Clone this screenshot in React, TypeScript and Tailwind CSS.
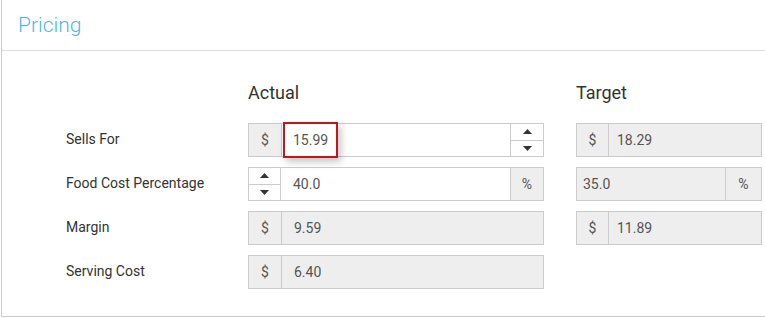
import React from 'react';

const font = { fontFamily: 'Roboto, "Liberation Sans", sans-serif' };

const Caret = ({ up }: { up?: boolean }) => (
  <svg width="9" height="5" viewBox="0 0 9 5">
    {up ? <path d="M0 5 L4.5 0 L9 5 Z" fill="#333" /> : <path d="M0 0 L9 0 L4.5 5 Z" fill="#333" />}
  </svg>
);

const Spinner = ({ className }: { className: string }) => (
  <div className={`flex flex-col ${className}`}>
    <button className="flex-1 flex items-center justify-center border-b border-[#ccc]">
      <Caret up />
    </button>
    <button className="flex-1 flex items-center justify-center">
      <Caret />
    </button>
  </div>
);

const Addon = ({ children, className }: { children: React.ReactNode; className: string }) => (
  <span className={`flex items-center justify-center bg-[#eee] text-[14px] text-[#555] ${className}`}>{children}</span>
);

const App = () => {
  return (
    <div className="w-[765px] h-[318px] overflow-hidden bg-white" style={font}>
      <div className="ml-px w-[800px] h-[317px] border-l border-b border-r border-[#ccc]">
        <div className="h-[51px] border-b border-[#ddd] pl-4 pt-[11px]">
          <h2 className="text-[21px] leading-7 font-light text-[#55b3ea]">Pricing</h2>
        </div>

        <div className="pt-[29px] pl-16 grid grid-cols-[150px_296px_186px] gap-x-8 gap-y-2.5 items-center">
          <div className="h-6" />
          <div className="text-[18px] leading-6 text-[#333] pt-[1px] mb-[8px]">Actual</div>
          <div className="text-[18px] leading-6 text-[#333] pt-[1px] mb-[8px]">Target</div>

          {/* Sells For */}
          <div className="text-[14px] text-[#333] -mt-0.5">Sells For</div>
          <div className="relative flex h-[34px] border border-[#ccc]">
            <Addon className="w-[33px] border-r border-[#ccc]">$</Addon>
            <input
              className="flex-1 min-w-0 pl-[11px] text-[14px] text-[#555] outline-none bg-white"
              defaultValue="15.99"
              readOnly
            />
            <Spinner className="w-[33px] border-l border-[#ccc]" />
            <div className="absolute left-[34px] top-[-2px] w-[55px] h-[36px] border-2 border-[#c0161c] shadow-[3px_4px_7px_rgba(0,0,0,0.22)] pointer-events-none" />
          </div>
          <div className="flex h-[34px] border border-[#ccc] bg-[#eee]">
            <Addon className="w-[32px] border-r border-[#ccc]">$</Addon>
            <span className="flex items-center pl-2 text-[14px] text-[#555]">18.29</span>
          </div>

          {/* Food Cost Percentage */}
          <div className="text-[14px] text-[#333] -mt-0.5">Food Cost Percentage</div>
          <div className="flex h-[34px] border border-[#ccc]">
            <Spinner className="w-[32px] border-r border-[#ccc]" />
            <input
              className="flex-1 min-w-0 pl-3 text-[14px] text-[#555] outline-none bg-white"
              defaultValue="40.0"
              readOnly
            />
            <Addon className="w-[33px] border-l border-[#ccc]">%</Addon>
          </div>
          <div className="flex h-[34px] border border-[#ccc] bg-[#eee]">
            <span className="flex-1 flex items-center pl-1.5 text-[14px] text-[#555]">35.0</span>
            <Addon className="w-[36px] border-l border-[#ccc]">%</Addon>
          </div>

          {/* Margin */}
          <div className="text-[14px] text-[#333] -mt-0.5">Margin</div>
          <div className="flex h-[34px] border border-[#ccc] bg-[#eee]">
            <Addon className="w-[33px] border-r border-[#ccc]">$</Addon>
            <span className="flex items-center pl-3 text-[14px] text-[#555]">9.59</span>
          </div>
          <div className="flex h-[34px] border border-[#ccc] bg-[#eee]">
            <Addon className="w-[32px] border-r border-[#ccc]">$</Addon>
            <span className="flex items-center pl-2 text-[14px] text-[#555]">11.89</span>
          </div>

          {/* Serving Cost */}
          <div className="text-[14px] text-[#333] -mt-0.5">Serving Cost</div>
          <div className="flex h-[34px] border border-[#ccc] bg-[#eee]">
            <Addon className="w-[33px] border-r border-[#ccc]">$</Addon>
            <span className="flex items-center pl-3 text-[14px] text-[#555]">6.40</span>
          </div>
          <div />
        </div>
      </div>
    </div>
  );
};

export default App;
